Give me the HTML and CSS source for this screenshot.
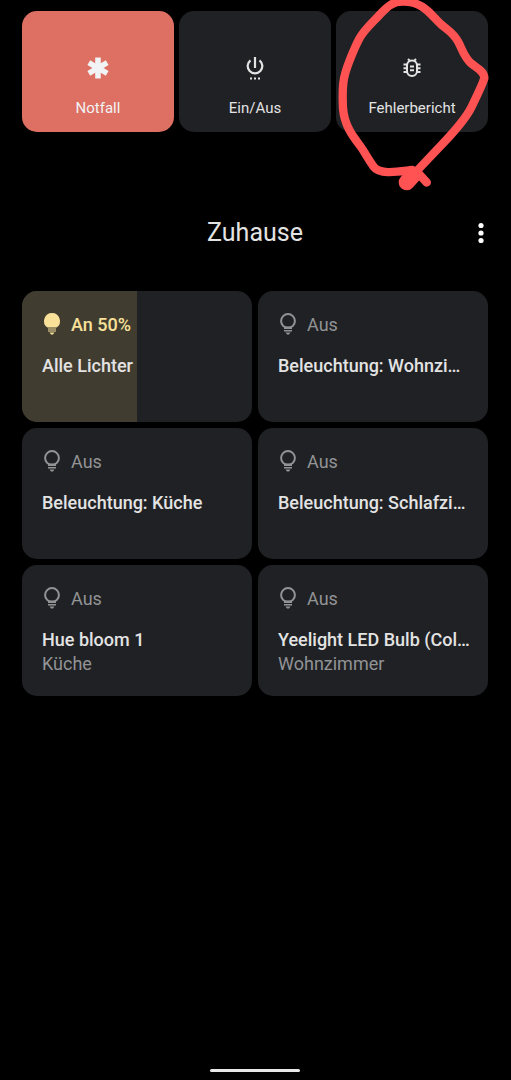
FILE: index.html
```html
<!DOCTYPE html>
<html lang="de">
<head>
    <meta charset="UTF-8">
    <meta name="viewport" content="width=device-width, initial-scale=1.0">
    <title>Zuhause</title>
    <link rel="stylesheet" href="styles.css">
</head>
<body>

<!-- Shared light bulb icons -->
<svg class="icon-defs" aria-hidden="true">
    <symbol id="bulb-off" viewBox="0 0 20 24">
        <circle cx="10" cy="8" r="6.900" fill="none" stroke="currentColor" stroke-width="2"/>
        <path d="M6 13.500h8v2.500H6zM6 17h8v1.600H6zM7.500 19.600h5L11 21.500H9z" fill="currentColor"/>
    </symbol>
    <symbol id="bulb-on" viewBox="0 0 20 24">
        <path d="M10 0a8 8 0 0 1 4.500 14.600h-9A8 8 0 0 1 10 0zM6 15.400h8v1.200H6zM6 17.400h8v1.200H6zM7.500 19.600h5L11 21.500H9z" fill="currentColor"/>
    </symbol>
</svg>

<div class="page">
    <section class="actions">
        <button class="action emergency" type="button">
            <svg class="action-icon" viewBox="0 0 24 24" aria-hidden="true">
                <path d="M9.200 1.500h5.600v5.700l5-2.900 2.800 4.800-5 2.900 5 2.900-2.800 4.800-5-2.900v5.700H9.200v-5.700l-5 2.900-2.800-4.800 5-2.900-5-2.900 2.800-4.800 5 2.900z" fill="currentColor"/>
            </svg>
            <span>Notfall</span>
        </button>
        <button class="action" type="button">
            <svg class="action-icon" viewBox="0 0 24 24" aria-hidden="true">
                <path d="M12 1v11M7.500 4.300a7.300 7.300 0 1 0 9 0" fill="none" stroke="currentColor" stroke-width="2.200"/>
                <path d="M7 21.500h2v2H7zM11 21.500h2v2h-2zM15 21.500h2v2h-2z" fill="currentColor"/>
            </svg>
            <span>Ein/Aus</span>
        </button>
        <div class="report">
            <button class="action" type="button">
                <svg class="action-icon" viewBox="0 0 24 24" aria-hidden="true">
                    <path d="M7 9.500a5 5 0 0 1 10 0v5.500a5 5 0 0 1-10 0zM8 3l2.500 2.500M16 3l-2.500 2.500M3.500 8.500h4M3.500 12.200h4M3.500 16h4M16.500 8.500h4M16.500 12.200h4M16.500 16h4M10 10.500h4M10 14.300h4" fill="none" stroke="currentColor" stroke-width="2"/>
                </svg>
                <span>Fehlerbericht</span>
            </button>
            <!-- Pen marking around the bug report button -->
            <svg class="marking" viewBox="0 0 558 585" aria-hidden="true">
                <path d="M262 510C225 514 165 526 146 500C128 476 123 462 105 437C82 407 58 375 54 325C52 285 51 252 60 223C67 195 90 140 104 114C120 86 145 65 165 43C190 17 205 4 235 5C295 5 315 42 347 72C370 92 385 98 400 126C412 149 416 168 435 187C455 205 478 212 478 235C471 258 451 297 439 322C421 358 390 392 356 428L264 525" stroke-width="25"/>
                <path d="M278 518L305 547" stroke-width="26"/>
                <path d="M245 547L264 526" stroke-width="48"/>
            </svg>
        </div>
    </section>

    <header class="home-header">
        <h1>Zuhause</h1>
        <button class="menu-btn" type="button" aria-label="Menü">
            <svg viewBox="0 0 6 22" aria-hidden="true">
                <circle cx="3" cy="3.500" r="2.600"/>
                <circle cx="3" cy="11" r="2.600"/>
                <circle cx="3" cy="18.500" r="2.600"/>
            </svg>
        </button>
    </header>

    <main class="tiles">
        <button class="tile on" type="button">
            <span class="level" style="width: 50%"></span>
            <span class="status"><svg aria-hidden="true"><use href="#bulb-on"/></svg>An 50%</span>
            <span class="name">Alle Lichter</span>
        </button>
        <button class="tile" type="button">
            <span class="status"><svg aria-hidden="true"><use href="#bulb-off"/></svg>Aus</span>
            <span class="name">Beleuchtung: Wohnzimmer</span>
        </button>
        <button class="tile" type="button">
            <span class="status"><svg aria-hidden="true"><use href="#bulb-off"/></svg>Aus</span>
            <span class="name">Beleuchtung: Küche</span>
        </button>
        <button class="tile" type="button">
            <span class="status"><svg aria-hidden="true"><use href="#bulb-off"/></svg>Aus</span>
            <span class="name">Beleuchtung: Schlafzimmer</span>
        </button>
        <button class="tile" type="button">
            <span class="status"><svg aria-hidden="true"><use href="#bulb-off"/></svg>Aus</span>
            <span class="name">Hue bloom 1</span>
            <span class="room">Küche</span>
        </button>
        <button class="tile" type="button">
            <span class="status"><svg aria-hidden="true"><use href="#bulb-off"/></svg>Aus</span>
            <span class="name">Yeelight LED Bulb (Color)</span>
            <span class="room">Wohnzimmer</span>
        </button>
    </main>

    <div class="nav-handle"></div>
</div>

</body>
</html>
```

FILE: styles.css
```css
* {
    margin: 0;
    padding: 0;
    box-sizing: border-box;
}

body {
    font-family: Roboto, sans-serif;
    background-color: #000;
    color: #e3e3e3;
}

button {
    border: none;
    background: none;
    color: inherit;
    font-family: inherit;
    cursor: pointer;
}

.icon-defs {
    display: none;
}

.page {
    display: flex;
    flex-direction: column;
    min-height: 100vh;
    padding: 11px 23px 8px 22px;
}

.actions {
    display: grid;
    grid-template-columns: repeat(3, 1fr);
    gap: 5px;
}

.action {
    display: flex;
    flex-direction: column;
    align-items: center;
    gap: 18px;
    width: 100%;
    padding: 45px 8px 14px;
    border-radius: 15px;
    background-color: #202124;
    font-size: 15px;
    line-height: 20px;
}

.action-icon {
    width: 24px;
    height: 24px;
}

.emergency {
    background-color: #dd6f63;
    color: #f1f3f4;
}

.report {
    position: relative;
}

.marking {
    position: absolute;
    top: -11px;
    left: -11px;
    width: 186px;
    height: 195px;
    fill: none;
    stroke: #ff5252;
    stroke-linecap: round;
    stroke-linejoin: round;
    pointer-events: none;
}

.home-header {
    display: grid;
    grid-template-columns: 1fr auto 1fr;
    align-items: center;
    margin: 84px 0 41px;
}

.home-header h1 {
    grid-column: 2;
    font-size: 25px;
    font-weight: 400;
    line-height: 34px;
}

.menu-btn {
    justify-self: end;
    padding: 4px;
}

.menu-btn svg {
    display: block;
    width: 6px;
    height: 22px;
    fill: #fff;
}

.tiles {
    display: grid;
    grid-template-columns: repeat(2, minmax(0, 1fr));
    gap: 6px;
}

.tile {
    position: relative;
    display: flex;
    flex-direction: column;
    min-height: 131px;
    padding: 22px 16px 20px 20px;
    border-radius: 15px;
    background-color: #202124;
    overflow: hidden;
    font-size: 18px;
    font-weight: 500;
    line-height: 24px;
    text-align: left;
}

.status {
    display: flex;
    align-items: center;
    gap: 9px;
    margin-bottom: 17px;
    color: #919395;
    font-weight: 400;
}

.status svg {
    width: 20px;
    height: 24px;
}

.name {
    overflow: hidden;
    text-overflow: ellipsis;
    white-space: nowrap;
}

.room {
    color: #919395;
    font-weight: 400;
}

.level {
    position: absolute;
    top: 0;
    bottom: 0;
    left: 0;
    background-color: #413c30;
}

.on .status,
.on .name {
    position: relative;
}

.on .status {
    color: #f9e19a;
    font-weight: 500;
}

.nav-handle {
    width: 90px;
    height: 3px;
    margin: auto auto 0;
    border-radius: 2px;
    background-color: #e8e8e8;
}
```
